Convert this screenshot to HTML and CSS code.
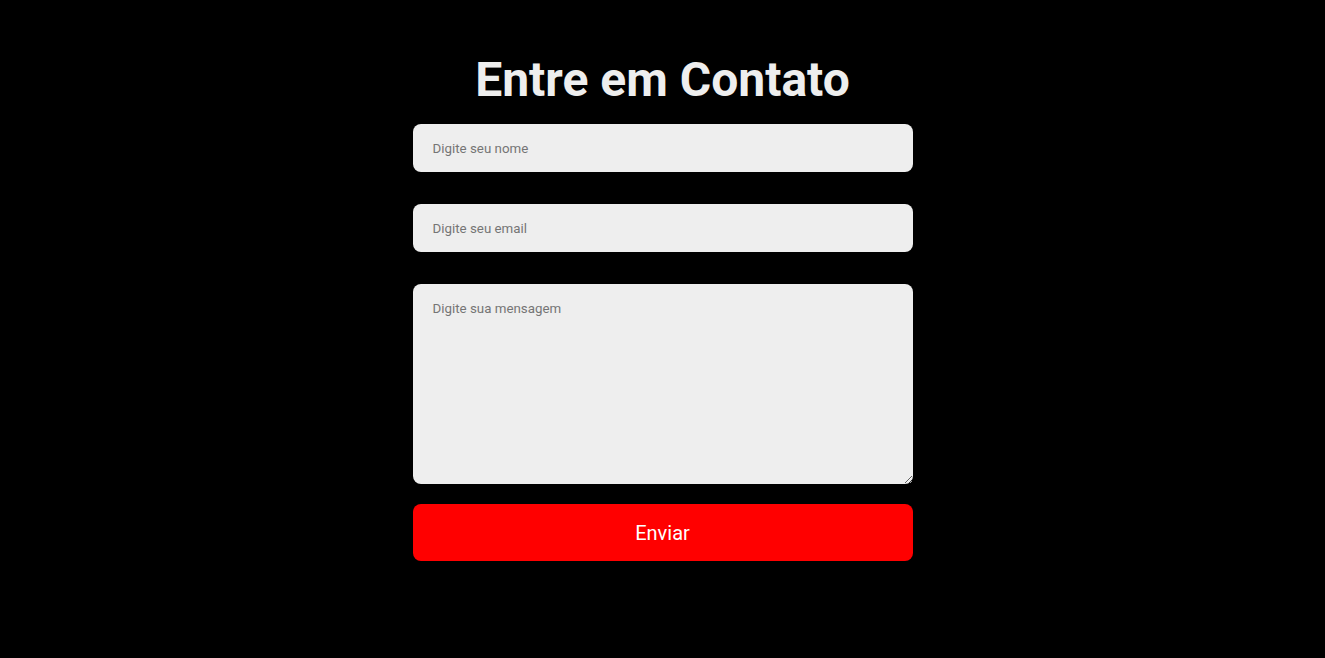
FILE: index.html
```html
<!DOCTYPE html>
<html lang="pt-BR">
<head>
<meta charset="utf-8">
<title>Contato</title>
<link rel="stylesheet" href="styles.css">
</head>
<body>
<main class="page">
  <section class="contact">
    <h1 class="contact-title">Entre em Contato</h1>
    <form class="contact-form">
      <input class="field" type="text" placeholder="Digite seu nome">
      <input class="field" type="email" placeholder="Digite seu email">
      <textarea class="field field-area" placeholder="Digite sua mensagem"></textarea>
      <button class="submit" type="button">Enviar</button>
    </form>
  </section>
</main>
</body>
</html>
```

FILE: styles.css
```css
html, body {
  margin: 0;
  padding: 0;
  background: #000;
  height: 100%;
}

body {
  font-family: Roboto, "Liberation Sans", sans-serif;
}

.page {
  display: flex;
  justify-content: center;
  padding-top: 52px;
}

.contact {
  width: 500px;
  display: flex;
  flex-direction: column;
  align-items: center;
}

.contact-title {
  margin: 0 0 16px;
  color: #eeeeee;
  font-size: 48px;
  font-weight: 700;
  line-height: 56px;
  text-align: center;
}

.contact-form {
  width: 100%;
  display: flex;
  flex-direction: column;
}

.field {
  box-sizing: border-box;
  width: 100%;
  height: 48px;
  margin: 0 0 32px;
  padding: 0 20px;
  border: none;
  border-radius: 8px;
  background: #eeeeee;
  font-family: Roboto, "Liberation Sans", sans-serif;
  font-size: 13.333px;
  color: #333;
  outline: none;
}

.field::placeholder {
  color: #757575;
}

.field-area {
  height: 200px;
  padding: 17px 20px;
  margin-bottom: 20px;
  resize: vertical;
}

.submit {
  height: 57px;
  width: 100%;
  border: none;
  border-radius: 8px;
  background: #ff0000;
  color: #ffffff;
  font-family: Roboto, "Liberation Sans", sans-serif;
  font-size: 20px;
  cursor: pointer;
}
```
